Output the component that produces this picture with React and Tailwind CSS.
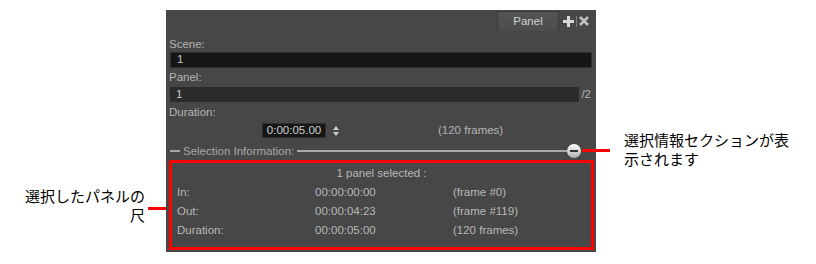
import React from 'react';

const ui = { fontFamily: '"Liberation Sans", Arial, sans-serif' };
const jp = { fontFamily: '"Noto Sans CJK JP", "Noto Sans", sans-serif' };

function Row({ label, time, frame }) {
  return (
    <div className="flex h-[19px] items-center text-[11.5px] text-[#b8b8b8]">
      <span className="w-[143px] pl-[5px]">{label}</span>
      <span className="w-[138px]">{time}</span>
      <span>{frame}</span>
    </div>
  );
}

export default function App() {
  return (
    <div className="relative w-[816px] h-[264px] bg-white overflow-hidden flex items-start" style={ui}>
      {/* left note */}
      <div className="w-[166px] mt-[186px] flex items-start">
        <div className="w-[145px] text-right text-[15px] leading-[19px] text-black" style={jp}>
          <div>選択したパネルの</div>
          <div>尺</div>
        </div>
        <div className="mt-[21px] ml-[3px] w-[18px] h-[3px] bg-[#ff0000]" />
      </div>

      {/* panel */}
      <div className="relative mt-[10px] w-[430px] h-[242px] bg-[#474747] flex flex-col">
        <div className="h-[21px] flex items-end justify-end pr-[7px]">
          <div className="w-[62px] h-[20px] mr-[4px] flex items-center justify-center bg-gradient-to-b from-[#555555] to-[#4c4c4c] border-t border-l border-r border-[#3a3a3a] text-[11.5px] text-[#d0d0d0]">
            Panel
          </div>
          <div className="h-[20px] flex items-center gap-[2px]">
            <svg width="11" height="11" viewBox="0 0 11 11">
              <rect x="4" y="0" width="3" height="11" fill="#d8d8d8" />
              <rect x="0" y="4" width="11" height="3" fill="#d8d8d8" />
            </svg>
            <div className="w-px h-[11px] bg-[#7a7a7a]" />
            <svg width="10" height="10" viewBox="0 0 10 10">
              <path d="M1 1 L9 9 M9 1 L1 9" stroke="#bfbfbf" strokeWidth="2.6" />
            </svg>
          </div>
        </div>

        <div className="mt-[6px] h-[14px] leading-[14px] pl-[3px] text-[11.5px] text-[#b4b4b4]">Scene:</div>
        <div className="mt-[1px] mx-[4px] h-[16px] bg-[#161616] border border-[#2f2f2f] flex items-center pl-[6px] text-[11.5px] text-[#c8c8c8]">1</div>

        <div className="mt-[2px] h-[14px] leading-[14px] pl-[3px] text-[11.5px] text-[#b4b4b4]">Panel:</div>
        <div className="mt-[2px] flex items-center pl-[4px] pr-[5px]">
          <div className="flex-1 h-[15px] bg-[#2b2b2b] flex items-center pl-[6px] text-[11.5px] text-[#c8c8c8]">1</div>
          <span className="ml-[2px] text-[11.5px] text-[#b4b4b4]">/2</span>
        </div>

        <div className="mt-[2px] h-[14px] leading-[14px] pl-[3px] text-[11.5px] text-[#b4b4b4]">Duration:</div>
        <div className="mt-[4px] h-[15px] flex items-center">
          <div className="ml-[96px] w-[64px] h-[15px] bg-[#161616] border border-[#2f2f2f] flex items-center justify-center text-[11.5px] text-[#d0d0d0]">0:00:05.00</div>
          <svg className="ml-[7px]" width="6" height="10" viewBox="0 0 6 10">
            <path d="M0 4 L3 0 L6 4 Z M0 6 L3 10 L6 6 Z" fill="#cfcfcf" />
          </svg>
          <span className="ml-[99px] text-[11.5px] text-[#b4b4b4]">(120 frames)</span>
        </div>

        <div className="mt-[6px] h-[14px] flex items-center pl-[4px] pr-[15px]">
          <div className="w-[10px] h-[2px] bg-[#a8a8a8]" />
          <span className="mx-[3px] text-[11.5px] text-[#a8a8a8]">Selection Information:</span>
          <div className="flex-1 h-[2px] bg-[#a8a8a8]" />
          <div className="w-[14px] h-[14px] rounded-full bg-gradient-to-b from-[#ffffff] to-[#b0b0b0] flex items-center justify-center">
            <div className="w-[8px] h-[2px] bg-[#333333]" />
          </div>
        </div>

        <div className="mt-[2px] ml-[3px] w-[425px] h-[90px] border-[3px] border-[#ff0000] pt-[1px]">
          <div className="h-[19px] flex items-center justify-center text-[11.5px] text-[#b8b8b8]">1 panel selected :</div>
          <Row label="In:" time="00:00:00:00" frame="(frame #0)" />
          <Row label="Out:" time="00:00:04:23" frame="(frame #119)" />
          <Row label="Duration:" time="00:00:05:00" frame="(120 frames)" />
        </div>

        <div className="absolute left-[416px] top-[139px] w-[28px] h-[3px] bg-[#ff0000]" />
      </div>

      {/* right note */}
      <div className="ml-[28px] mt-[130px] text-[15px] leading-[19px] text-black" style={jp}>
        <div>選択情報セクションが表</div>
        <div>示されます</div>
      </div>
    </div>
  );
}
